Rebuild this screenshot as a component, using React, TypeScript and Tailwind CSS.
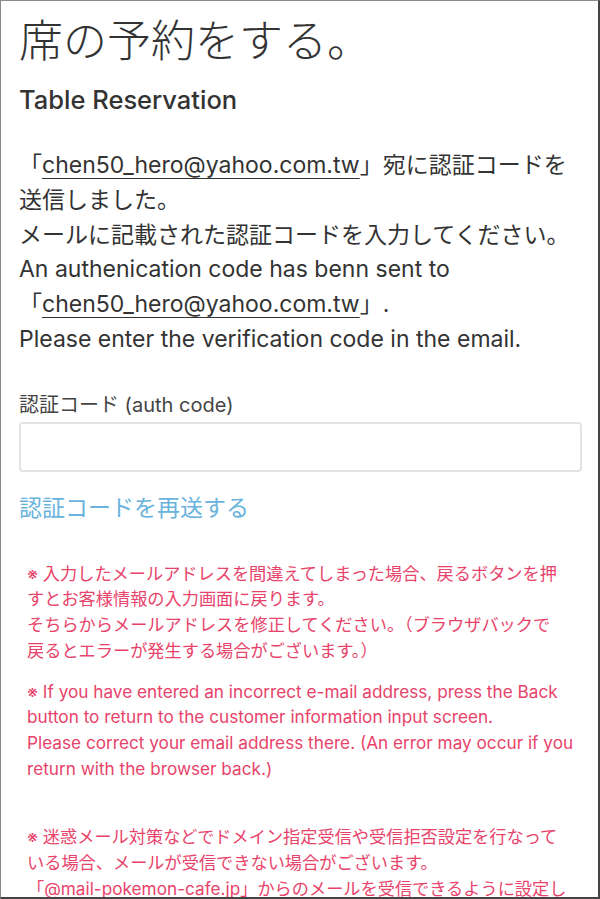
const font = { fontFamily: 'Inter, "Noto Sans CJK JP", sans-serif' }

function Email({ children }: { children: string }) {
  return <span className="underline decoration-1 underline-offset-[5px]">{children}</span>
}

const notices = [
  {
    gap: 'mt-[38px]',
    lines: [
      '※ 入力したメールアドレスを間違えてしまった場合、戻るボタンを押',
      'すとお客様情報の入力画面に戻ります。',
      'そちらからメールアドレスを修正してください。（ブラウザバックで',
      '戻るとエラーが発生する場合がございます。）',
    ],
  },
  {
    gap: 'mt-[15px]',
    lines: [
      '※ If you have entered an incorrect e-mail address, press the Back',
      'button to return to the customer information input screen.',
      'Please correct your email address there. (An error may occur if you',
      'return with the browser back.)',
    ],
  },
  {
    gap: 'mt-[43px]',
    lines: [
      '※ 迷惑メール対策などでドメイン指定受信や受信拒否設定を行なって',
      'いる場合、メールが受信できない場合がございます。',
      '「@mail-pokemon-cafe.jp」からのメールを受信できるように設定し',
      'てください。',
    ],
  },
]

export default function App() {
  return (
    <div
      style={font}
      className="w-[600px] h-[899px] overflow-hidden bg-white border-l border-t border-[#8a8a8a] border-r-2 border-b-2 border-r-[#444] border-b-[#444]"
    >
      <div className="px-[18px] pt-[12px] text-[#333]">
        <h1 className="text-[44px] leading-[56px] font-light whitespace-nowrap">席の予約をする。</h1>
        <h2 className="mt-[16px] text-[25.5px] leading-[30px] font-medium">Table Reservation</h2>

        <div className="mt-[33px] text-[23px] leading-[34.8px] whitespace-nowrap">
          <p>
            「<Email>chen50_hero@yahoo.com.tw</Email>」宛に認証コードを
          </p>
          <p>送信しました。</p>
          <p>メールに記載された認証コードを入力してください。</p>
          <p>An authenication code has benn sent to</p>
          <p>
            「<Email>chen50_hero@yahoo.com.tw</Email>」.
          </p>
          <p>Please enter the verification code in the email.</p>
        </div>

        <label className="block mt-[35px] text-[20px] leading-[26px] text-[#444]">認証コード (auth code)</label>
        <input
          type="text"
          className="block mt-[4px] w-[563px] h-[50px] rounded-[4px] border-2 border-[#e3e3e3] outline-none"
        />

        <a className="block mt-[21px] text-[23px] leading-[30px] text-[#6ab3dc]">認証コードを再送する</a>

        {notices.map((n, i) => (
          <div key={i} className={`${n.gap} pl-[8px] text-[17.2px] leading-[25.7px] text-[#e8436a] whitespace-nowrap`}>
            {n.lines.map((l) => (
              <p key={l}>{l}</p>
            ))}
          </div>
        ))}
      </div>
    </div>
  )
}
